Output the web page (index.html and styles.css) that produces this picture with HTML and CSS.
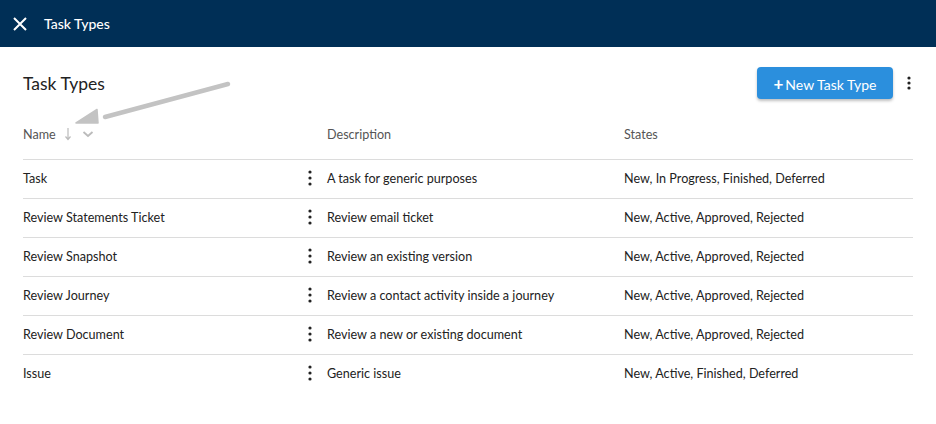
FILE: index.html
```html
<!DOCTYPE html>
<html lang="en">
<head>
    <meta charset="UTF-8">
    <link rel="stylesheet" href="styles.css">
</head>
<body>

<header class="topbar">
    <svg class="close-icon" width="16" height="16" viewBox="0 0 16 16">
        <path d="M2 2 L14 14 M14 2 L2 14" stroke="#fff" stroke-width="2" fill="none"/>
    </svg>
    <span class="topbar-title">Task Types</span>
</header>

<main class="content">
    <div class="title-row">
        <h1>Task Types</h1>
        <button class="new-btn"><span class="plus">+</span>New Task Type</button>
        <svg class="kebab head-kebab" width="4" height="14" viewBox="0 0 4 14">
            <circle cx="2" cy="2" r="1.6"/><circle cx="2" cy="7" r="1.6"/><circle cx="2" cy="12" r="1.6"/>
        </svg>
    </div>

    <div class="table">
        <div class="thead">
            <div class="cell name-head">Name
                <svg class="sort-arrow" width="8" height="14" viewBox="0 0 8 14">
                    <path d="M4 1 V12 M1.5 9.5 L4 12.5 L6.5 9.5" stroke="#bbb" stroke-width="1.2" fill="none"/>
                </svg>
                <svg class="sort-chev" width="12" height="8" viewBox="0 0 12 8">
                    <path d="M1.5 2 L6 6 L10.5 2" stroke="#bbb" stroke-width="1.8" fill="none"/>
                </svg>
            </div>
            <div class="cell">Description</div>
            <div class="cell">States</div>
        </div>

        <div class="row">
            <div class="cell name-cell">Task <svg class="kebab" width="4" height="16" viewBox="0 0 4 16"><circle cx="2" cy="2" r="1.6"/><circle cx="2" cy="8" r="1.6"/><circle cx="2" cy="14" r="1.6"/></svg></div>
            <div class="cell">A task for generic purposes</div>
            <div class="cell">New, In Progress, Finished, Deferred</div>
        </div>
        <div class="row">
            <div class="cell name-cell">Review Statements Ticket <svg class="kebab" width="4" height="16" viewBox="0 0 4 16"><circle cx="2" cy="2" r="1.6"/><circle cx="2" cy="8" r="1.6"/><circle cx="2" cy="14" r="1.6"/></svg></div>
            <div class="cell">Review email ticket</div>
            <div class="cell">New, Active, Approved, Rejected</div>
        </div>
        <div class="row">
            <div class="cell name-cell">Review Snapshot <svg class="kebab" width="4" height="16" viewBox="0 0 4 16"><circle cx="2" cy="2" r="1.6"/><circle cx="2" cy="8" r="1.6"/><circle cx="2" cy="14" r="1.6"/></svg></div>
            <div class="cell">Review an existing version</div>
            <div class="cell">New, Active, Approved, Rejected</div>
        </div>
        <div class="row">
            <div class="cell name-cell">Review Journey <svg class="kebab" width="4" height="16" viewBox="0 0 4 16"><circle cx="2" cy="2" r="1.6"/><circle cx="2" cy="8" r="1.6"/><circle cx="2" cy="14" r="1.6"/></svg></div>
            <div class="cell">Review a contact activity inside a journey</div>
            <div class="cell">New, Active, Approved, Rejected</div>
        </div>
        <div class="row">
            <div class="cell name-cell">Review Document <svg class="kebab" width="4" height="16" viewBox="0 0 4 16"><circle cx="2" cy="2" r="1.6"/><circle cx="2" cy="8" r="1.6"/><circle cx="2" cy="14" r="1.6"/></svg></div>
            <div class="cell">Review a new or existing document</div>
            <div class="cell">New, Active, Approved, Rejected</div>
        </div>
        <div class="row">
            <div class="cell name-cell">Issue <svg class="kebab" width="4" height="16" viewBox="0 0 4 16"><circle cx="2" cy="2" r="1.6"/><circle cx="2" cy="8" r="1.6"/><circle cx="2" cy="14" r="1.6"/></svg></div>
            <div class="cell">Generic issue</div>
            <div class="cell">New, Active, Finished, Deferred</div>
        </div>
    </div>

    <!-- annotation arrow pointing at the sort control -->
    <svg class="annotation" width="240" height="70" viewBox="0 0 240 70">
        <path d="M203 10 L80 43" stroke="#c3c3c3" stroke-width="4.5" stroke-linecap="round" fill="none"/>
        <path d="M51 49 L72 35.5 L73 49 Z" fill="#c3c3c3" stroke="#c3c3c3" stroke-width="1.5" stroke-linejoin="round"/>
    </svg>
</main>

</body>
</html>
```

FILE: styles.css
```css
body {
    margin: 0;
    font-family: 'Lato', 'Liberation Sans', sans-serif;
    background-color: #fff;
    color: #222;
}

.topbar {
    display: flex;
    align-items: center;
    height: 47px;
    background-color: #002f56;
    padding-left: 12px;
}

.close-icon {
    margin-right: 16px;
}

.topbar-title {
    color: #fff;
    font-size: 14px;
    font-weight: 500;
}

.content {
    position: relative;
    padding: 0 23px;
}

.title-row {
    display: flex;
    align-items: center;
    padding-top: 20px;
    height: 32px;
}

h1 {
    flex: 1;
    margin: 0;
    font-size: 17.5px;
    font-weight: 400;
    color: #222;
}

.new-btn {
    height: 32px;
    width: 136px;
    border: none;
    border-radius: 4px;
    background-color: #2b8fdd;
    color: #fff;
    font-family: inherit;
    font-size: 14px;
    box-shadow: 0 2px 3px rgba(0, 0, 0, 0.25);
    padding: 0;
    margin-right: 14px;
}

.plus {
    font-weight: 700;
    font-size: 17px;
    margin-right: 2px;
}

.kebab {
    fill: #222;
}

.head-kebab {
    margin-right: 2px;
}

.table {
    font-size: 12.6px;
}

.thead, .row {
    display: grid;
    grid-template-columns: 304px 297px 1fr;
    align-items: center;
}

.thead {
    height: 50px;
    padding-top: 10px;
    color: #555;
}

.row {
    height: 36px;
    padding-bottom: 2px;
    border-top: 1px solid #dcdcdc;
}

.name-head {
    display: flex;
    align-items: center;
}

.sort-arrow {
    margin-left: 8px;
}

.sort-chev {
    margin-left: 10px;
}

.name-cell {
    display: flex;
    align-items: center;
    justify-content: space-between;
    padding-right: 15px;
}

.annotation {
    position: absolute;
    left: 25px;
    top: 27px;
}
```
